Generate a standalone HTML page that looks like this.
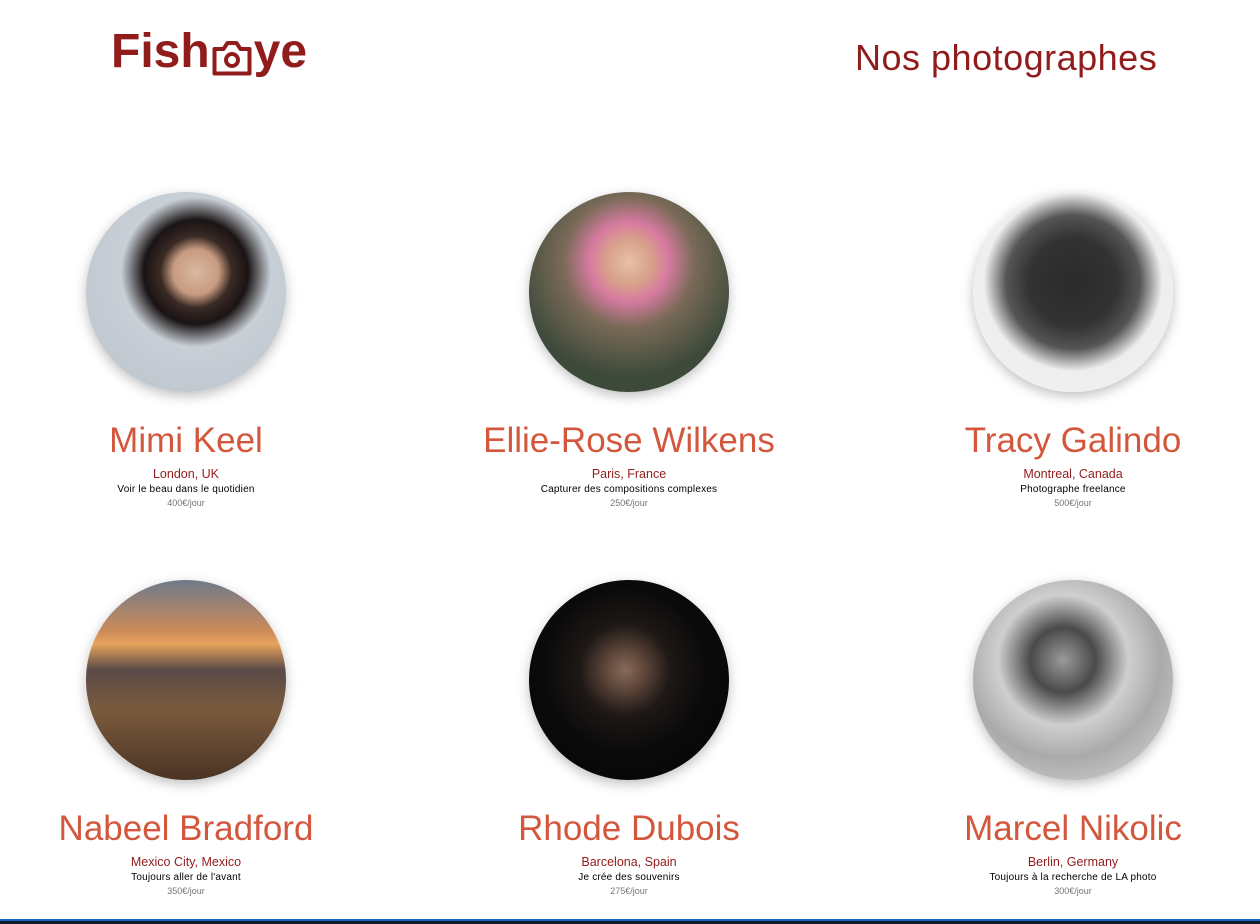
<!DOCTYPE html>
<html><head><meta charset="utf-8"><style>
*{margin:0;padding:0;box-sizing:border-box}
body{width:1260px;height:924px;background:#fff;font-family:"Liberation Sans",sans-serif;position:relative;overflow:hidden}
.logo{position:absolute;left:111px;top:24px;font-size:48px;font-weight:bold;color:#901c1c;line-height:56px;display:flex;align-items:flex-end}
.logo svg{margin:0 2px 4px 2px}
.title{position:absolute;left:855px;top:37px;font-size:36px;color:#901c1c;line-height:42px;letter-spacing:.5px}
.card{position:absolute;width:420px;text-align:center}
.ph{width:200px;height:200px;border-radius:50%;margin:0 auto;box-shadow:0 4px 12px rgba(0,0,0,.25)}
.name{font-size:35px;color:#d3573c;margin-top:28px;line-height:42px}
.loc{font-size:12.5px;color:#901c1c;margin-top:4px;line-height:16px}
.tag{font-size:10px;color:#000;line-height:14px;margin-top:1px;letter-spacing:.2px}
.price{font-size:9px;color:#757575;line-height:12px}
.bar{position:absolute;left:0;top:919px;width:1260px;height:5px;background:#0d1b2a;border-top:2px solid #1565c0}
</style></head><body>
<div class="logo">Fish<svg width="40" height="36" viewBox="0 0 40 36"><path d="M2.5 9h9l4-6h9l4 6h9v24.5h-35z" fill="none" stroke="#901c1c" stroke-width="4" stroke-linejoin="round"/><circle cx="20" cy="20" r="6" fill="none" stroke="#901c1c" stroke-width="4"/></svg>ye</div>
<div class="title">Nos photographes</div>

<div class="card" style="left:-24px;top:192px"><div class="ph" style="background:radial-gradient(circle at 55% 40%,#d9b8a0 0,#c79b80 14%,#3a2a25 22%,#1a1414 32%,#c8cfd6 46%,#b9c2cb 100%)"></div><div class="name">Mimi Keel</div><div class="loc">London, UK</div><div class="tag">Voir le beau dans le quotidien</div><div class="price">400€/jour</div></div>
<div class="card" style="left:419px;top:192px"><div class="ph" style="background:radial-gradient(circle at 50% 35%,#e7c0a6 0,#d8a08a 14%,#d77ba0 24%,#7a6a58 40%,#3d4a3a 70%),linear-gradient(#6a7a6a,#c22 80%)"></div><div class="name">Ellie-Rose Wilkens</div><div class="loc">Paris, France</div><div class="tag">Capturer des compositions complexes</div><div class="price">250€/jour</div></div>
<div class="card" style="left:863px;top:192px"><div class="ph" style="background:radial-gradient(circle at 50% 45%,#2a2a2a 0,#333 30%,#555 45%,#eee 60%,#f2f2f2 100%)"></div><div class="name">Tracy Galindo</div><div class="loc">Montreal, Canada</div><div class="tag">Photographe freelance</div><div class="price">500€/jour</div></div>

<div class="card" style="left:-24px;top:580px"><div class="ph" style="background:linear-gradient(#6e7a8a 0,#c98a5a 25%,#e7a25a 32%,#5a4a48 45%,#7a5a3c 65%,#4a3424 100%)"></div><div class="name">Nabeel Bradford</div><div class="loc">Mexico City, Mexico</div><div class="tag">Toujours aller de l'avant</div><div class="price">350€/jour</div></div>
<div class="card" style="left:419px;top:580px"><div class="ph" style="background:radial-gradient(circle at 48% 45%,#8a6a5a 0,#5a4438 14%,#1e1816 30%,#0a0a0a 55%,#050505 100%)"></div><div class="name">Rhode Dubois</div><div class="loc">Barcelona, Spain</div><div class="tag">Je crée des souvenirs</div><div class="price">275€/jour</div></div>
<div class="card" style="left:863px;top:580px"><div class="ph" style="background:radial-gradient(circle at 45% 40%,#9a9a9a 0,#4a4a4a 20%,#cfcfcf 40%,#aaa 60%,#e0e0e0 100%)"></div><div class="name">Marcel Nikolic</div><div class="loc">Berlin, Germany</div><div class="tag">Toujours à la recherche de LA photo</div><div class="price">300€/jour</div></div>
<div class="bar"></div>
</body></html>
